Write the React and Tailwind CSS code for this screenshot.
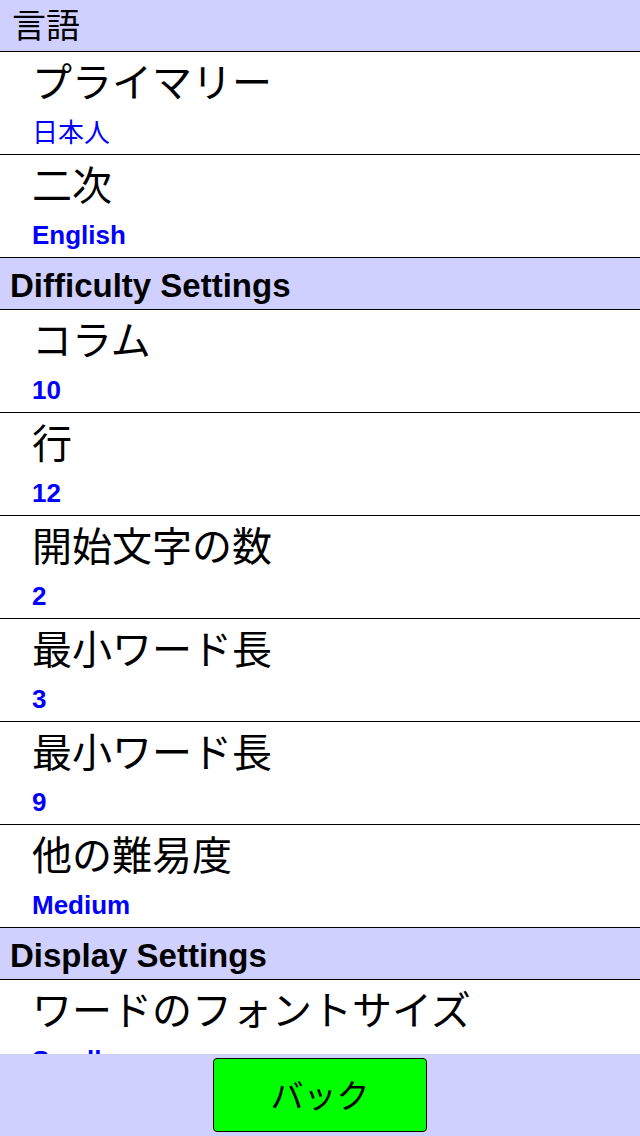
const SECTIONS = [
  { title: '言語', bold: false, rows: [
    { label: 'プライマリー', value: '日本人', jp: true },
    { label: '二次', value: 'English' },
  ]},
  { title: 'Difficulty Settings', bold: true, rows: [
    { label: 'コラム', value: '10' },
    { label: '行', value: '12' },
    { label: '開始文字の数', value: '2' },
    { label: '最小ワード長', value: '3' },
    { label: '最小ワード長', value: '9' },
    { label: '他の難易度', value: 'Medium' },
  ]},
  { title: 'Display Settings', bold: true, rows: [
    { label: 'ワードのフォントサイズ', value: 'Small' },
    { label: 'テーマ', value: 'Light' },
  ]},
]

const SANS = { fontFamily: '"Liberation Sans", "Noto Sans CJK JP", sans-serif' }
const JP = { fontFamily: '"Noto Sans CJK JP", sans-serif' }

function Header({ title, bold }) {
  if (bold) {
    return (
      <div className="h-[52px] bg-[#d0d0ff] border-b border-black pl-[10px] pt-[11px]">
        <div className="text-[33px] leading-none font-bold text-black" style={SANS}>{title}</div>
      </div>
    )
  }
  return (
    <div className="h-[52px] bg-[#d0d0ff] border-b border-black pl-[12px] pt-[7px]">
      <div className="text-[34px] leading-none text-black" style={JP}>{title}</div>
    </div>
  )
}

function Row({ label, value, jp }) {
  return (
    <div className="h-[103px] bg-white border-b border-black pl-[32px] flex flex-col">
      <div className="text-[40px] leading-none text-black pt-[8px]" style={JP}>{label}</div>
      {jp
        ? <div className="text-[26px] leading-none text-[#0000ff] mt-[18px]" style={JP}>{value}</div>
        : <div className="text-[26px] leading-none font-bold text-[#0000ff] mt-[19px]" style={SANS}>{value}</div>}
    </div>
  )
}

export default function App() {
  return (
    <div className="w-[640px] h-[1136px] flex flex-col bg-white overflow-hidden">
      <div className="flex-1 overflow-hidden">
        {SECTIONS.map(s => (
          <div key={s.title}>
            <Header title={s.title} bold={s.bold} />
            {s.rows.map((r, i) => <Row key={i} {...r} />)}
          </div>
        ))}
      </div>
      <div className="h-[82px] bg-[#d0d0ff] flex justify-center pt-[4px]">
        <button className="w-[214px] h-[74px] bg-[#00ff00] border border-black rounded-[4px] text-[33px] text-black" style={JP}>
          バック
        </button>
      </div>
    </div>
  )
}
